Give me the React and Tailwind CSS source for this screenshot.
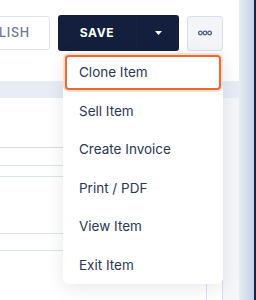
import React from "react";

const items = ["Clone Item", "Sell Item", "Create Invoice", "Print / PDF", "View Item", "Exit Item"];

export default function App() {
  return (
    <div
      className="relative w-[256px] h-[300px] overflow-hidden bg-white flex"
      style={{ fontFamily: "Inter, 'Noto Sans', sans-serif" }}
    >
      {/* main column */}
      <div className="w-[239px] flex flex-col">
        {/* header */}
        <div className="h-[81px] bg-white pt-[15px]">
          <div className="flex items-center h-[36px] gap-[8px]">
            <div className="ml-[-49px] w-[99px] h-[34px] shrink-0 rounded-[3px] border border-[#dde3ee] bg-white flex items-center justify-center text-[12.5px] font-medium tracking-[0.8px] text-[#6b7896]">
              PUBLISH
            </div>
            <div className="w-[121px] h-[36px] shrink-0 rounded-[3px] bg-[#131f3d] flex">
              <div className="w-[79px] flex items-center justify-center text-white text-[12px] font-bold tracking-[0.6px] border-r border-[#172342]">
                SAVE
              </div>
              <div className="flex-1 flex items-center justify-center">
                <svg width="7" height="4" viewBox="0 0 7 4">
                  <path d="M0 0H7L3.5 4Z" fill="#ffffff" />
                </svg>
              </div>
            </div>
            <div className="w-[36px] h-[35px] shrink-0 rounded-[3px] border border-[#d8dfec] bg-[#f3f5f9] flex items-center justify-center">
              <svg width="14" height="6" viewBox="0 0 14 6">
                <circle cx="2.4" cy="3" r="1.8" fill="none" stroke="#4f6089" strokeWidth="1.3" />
                <circle cx="7" cy="3" r="1.8" fill="none" stroke="#4f6089" strokeWidth="1.3" />
                <circle cx="11.6" cy="3" r="1.8" fill="none" stroke="#4f6089" strokeWidth="1.3" />
              </svg>
            </div>
          </div>
        </div>
        {/* band */}
        <div className="h-[17px] bg-[#e8ecf5]" />
        {/* content */}
        <div className="flex-1 flex">
          <div className="w-[223px] bg-white border-r border-[#d7e0f0] flex flex-col">
            <div className="h-[49px]" />
            <div className="h-px bg-[#d9dce2]" />
            <div className="h-[17px]" />
            <div className="h-px bg-[#dbe3f1]" />
            <div className="h-[10px]" />
            <div className="h-px bg-[#dbe3f1]" />
            <div className="h-[56px]" />
            <div className="h-px bg-[#dbe3f1]" />
            <div className="h-[16px]" />
            <div className="h-px bg-[#dbe3f1]" />
            <div className="flex-1 flex justify-end">
              <div className="w-[16px] border-l border-[#d7e0f0]" />
            </div>
          </div>
          <div className="flex-1 bg-[#f5f6f8]" />
        </div>
      </div>
      {/* right strip */}
      <div className="w-[15px] bg-gradient-to-r from-[#e8ecf4] to-[#c4d1e6]" />
      <div className="w-[2px] bg-[#1a2442]" />

      {/* dropdown */}
      <div className="absolute left-[63px] top-[53px] w-[160px] rounded-[6px] bg-white shadow-[0_4px_18px_rgba(20,30,60,0.10)]">
        {items.map((t, i) => (
          <div key={t} className="h-[38.5px] p-[2px]">
            <div
              className={
                i === 0
                  ? "h-full rounded-[4px] border-2 border-[#ea6a30] shadow-[0_0_0_2px_rgba(234,106,48,0.22)] flex items-center pl-[12px] text-[13.5px] text-[#2a375a]"
                  : "h-full rounded-[4px] border-2 border-transparent flex items-center pl-[12px] text-[13.5px] text-[#2a375a]"
              }
            >
              {t}
            </div>
          </div>
        ))}
      </div>
    </div>
  );
}
